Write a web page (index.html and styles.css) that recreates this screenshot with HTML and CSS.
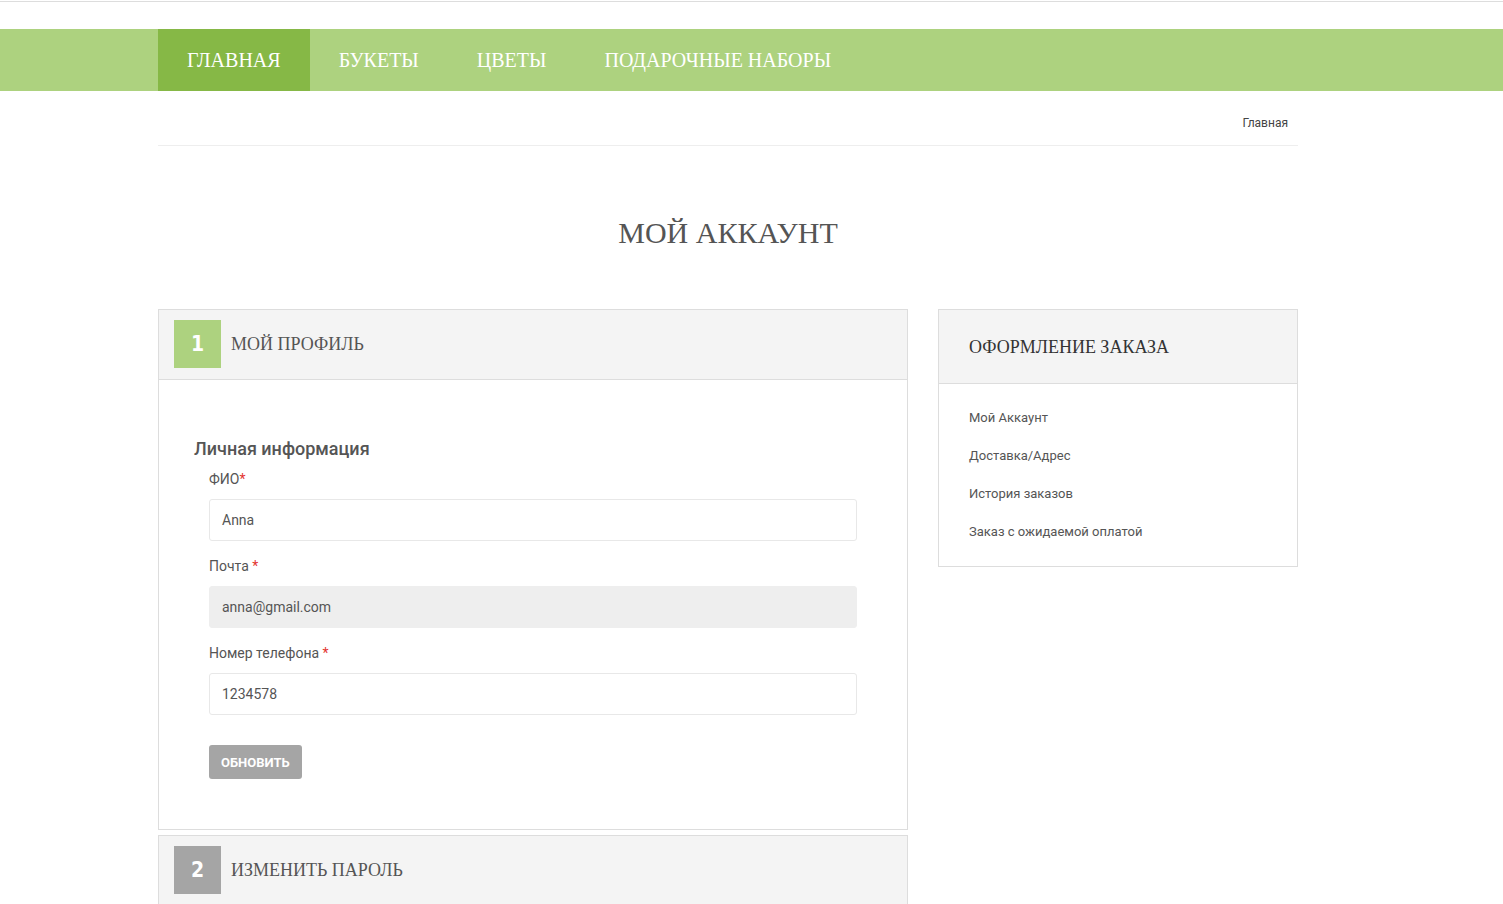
FILE: index.html
```html
<!DOCTYPE html>
<html lang="ru">
<head>
<meta charset="utf-8">
<title>Мой аккаунт</title>
<link rel="stylesheet" href="styles.css">
</head>
<body>
<div class="topline"></div>
<nav class="nav">
  <ul class="nav-list">
    <li class="nav-item active">ГЛАВНАЯ</li>
    <li class="nav-item">БУКЕТЫ</li>
    <li class="nav-item">ЦВЕТЫ</li>
    <li class="nav-item">ПОДАРОЧНЫЕ НАБОРЫ</li>
  </ul>
</nav>
<div class="container">
  <div class="breadcrumb"><span>Главная</span></div>
  <h1 class="page-title">МОЙ АККАУНТ</h1>
  <div class="layout">
    <div class="main-col">
      <section class="panel">
        <div class="panel-head">
          <span class="step step-green">1</span>
          <span class="panel-title">МОЙ ПРОФИЛЬ</span>
        </div>
        <div class="panel-body">
          <h3 class="form-heading">Личная информация</h3>
          <div class="field">
            <label class="label">ФИО<span class="req">*</span></label>
            <div class="input">Anna</div>
          </div>
          <div class="field">
            <label class="label">Почта <span class="req">*</span></label>
            <div class="input input-disabled">anna@gmail.com</div>
          </div>
          <div class="field">
            <label class="label">Номер телефона <span class="req">*</span></label>
            <div class="input">1234578</div>
          </div>
          <button class="btn">ОБНОВИТЬ</button>
        </div>
      </section>
      <section class="panel panel-second">
        <div class="panel-head">
          <span class="step step-gray">2</span>
          <span class="panel-title">ИЗМЕНИТЬ ПАРОЛЬ</span>
        </div>
      </section>
    </div>
    <aside class="side">
      <div class="side-head">ОФОРМЛЕНИЕ ЗАКАЗА</div>
      <ul class="side-list">
        <li>Мой Аккаунт</li>
        <li>Доставка/Адрес</li>
        <li>История заказов</li>
        <li>Заказ с ожидаемой оплатой</li>
      </ul>
    </aside>
  </div>
</div>
</body>
</html>
```

FILE: styles.css
```css
* { box-sizing: border-box; }
html, body { margin: 0; padding: 0; background: #fff; }
body { font-family: Roboto, "Liberation Sans", sans-serif; color: #555; overflow: hidden; height: 904px; }

.topline { margin-top: 1px; height: 28px; border-top: 1px solid #ddd; }

.nav { background: #add27f; height: 62px; }
.nav-list { list-style: none; margin: 0 0 0 158px; padding: 0; display: flex; height: 62px; }
.nav-item {
  font-family: "Liberation Serif", "Times New Roman", serif;
  font-size: 20px; color: #fff; line-height: 62px; padding: 0 29px;
}
.nav-item.active { background: #86b846; }

.container { margin-left: 158px; width: 1140px; }

.breadcrumb {
  display: flex; justify-content: flex-end;
  padding: 24px 10px 13px 0; border-bottom: 1px solid #eee;
  font-size: 12px; line-height: 17px; color: #444;
}

.page-title {
  margin: 69px 0 59px; text-align: center;
  font-family: "Liberation Serif", "Times New Roman", serif;
  font-weight: normal; font-size: 30px; line-height: 35px; color: #555;
}

.layout { display: flex; gap: 30px; align-items: flex-start; }
.main-col { width: 750px; }
.side { width: 360px; border: 1px solid #ddd; }

.panel { border: 1px solid #ddd; }
.panel-second { margin-top: 5px; }
.panel-head {
  background: #f4f4f4; padding: 10px 15px 11px; display: flex; align-items: center; gap: 10px;
}
.panel-body { border-top: 1px solid #ddd; padding: 59px 50px 50px 50px; }
.step {
  width: 47px; height: 48px; display: flex; align-items: center; justify-content: center;
  color: #fff; font-family: "Liberation Sans Narrow", "DejaVu Sans Condensed", "Liberation Sans", sans-serif;
  font-stretch: condensed; font-weight: bold; font-size: 21px;
}
.step-green { background: #add27f; }
.step-gray { background: #a5a5a5; }
.panel-title {
  font-family: "Liberation Serif", "Times New Roman", serif;
  font-size: 18px; color: #555; padding-top: 1px;
}

.form-heading {
  margin: 0 0 11px -15px; font-size: 18px; font-weight: 500; line-height: 20px; color: #555;
}
.field + .field { margin-top: 16px; }
.label { display: block; font-size: 14px; line-height: 18px; color: #555; margin-bottom: 11px; }
.req { color: #e3342f; }
.input {
  height: 42px; border: 1px solid #e8e8e8; border-radius: 3px;
  padding: 0 12px; display: flex; align-items: center;
  font-size: 14px; color: #555; background: #fff;
}
.input-disabled { background: #eee; border-color: #eee; }

.btn {
  margin-top: 30px; height: 34px; padding: 0 12px; border: 0; border-radius: 3px;
  background: #a5a5a5; color: #fff; font-family: Roboto, "Liberation Sans", sans-serif;
  font-size: 13px; font-weight: bold; display: block;
}

.side-head {
  background: #f4f4f4; border-bottom: 1px solid #ddd; height: 74px; line-height: 71px;
  padding: 2px 30px 0; font-family: "Liberation Serif", "Times New Roman", serif;
  font-size: 18px; color: #333;
}
.side-list { list-style: none; margin: 0; padding: 25px 30px 25px; }
.side-list li { font-size: 13px; line-height: 18px; color: #555; }
.side-list li + li { margin-top: 20px; }
```
